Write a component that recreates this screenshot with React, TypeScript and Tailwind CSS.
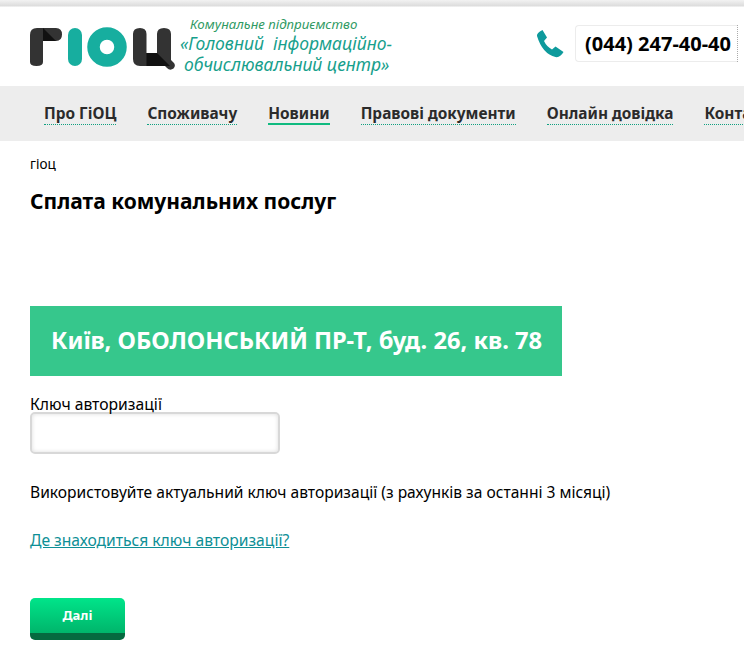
const NAV_ITEMS = ['Про ГіОЦ', 'Споживачу', 'Новини', 'Правові документи', 'Онлайн довідка', 'Контакти']

function Logo() {
  return (
    <svg width="146" height="43" viewBox="0 0 146 43" className="shrink-0">
      {/* Г */}
      <path d="M0 35 V8 Q0 1 7 1 H26 Q32 1 32 7.500 Q32 14 26 14 H13 V35 Q13 39 6.500 39 Q0 39 0 35 Z" fill="#333333" />
      <path d="M13 1 L26 14 H13 Z" fill="#111111" />
      {/* І */}
      <rect x="38" y="1" width="14" height="38" rx="7" fill="#17ae9f" />
      {/* О */}
      <circle cx="77" cy="20" r="13.500" fill="none" stroke="#17ae9f" strokeWidth="12.500" />
      {/* Ц */}
      <path d="M103 7 Q103 1 110 1 Q116.500 1 116.500 7 V26 H127 V7 Q127 1 134 1 Q141 1 141 7 V33 L144 36 Q146 39 143.500 41.500 Q140 44 137 41 L135 39 H110 Q103 39 103 32 Z" fill="#333333" />
      <path d="M116.500 26 H127 L140 39 H116.500 Z" fill="#111111" />
    </svg>
  )
}

function PhoneIcon() {
  return (
    <svg width="28" height="28" viewBox="0 0 28 28" className="shrink-0">
      <path d="M1 6 Q0.500 3 6.500 0 L11 7.500 L8 11 Q10.500 16.500 16 19.500 L19.500 16.500 L27.500 22 Q24 28 19.500 27 Q6.500 24 1 6 Z" fill="#0e9a9c" />
    </svg>
  )
}

export default function App() {
  return (
    <div className="h-[671px] w-[744px] overflow-hidden bg-white text-black" style={{ fontFamily: '"Noto Sans", sans-serif' }}>
      {/* Header */}
      <header className="flex h-[86px] items-start bg-[linear-gradient(#f2f2f2_0,#dcdcdc_6px,#ffffff_7px)] pl-[30px]">
        <div className="mt-[27px]">
          <Logo />
        </div>
        <div className="ml-[4px] mt-[16px] w-[230px] text-[17.5px] italic leading-[21px] text-[#17a08c]">
          <div className="pl-[10px] text-[13.300px] leading-[17px] text-[#2f9a63]">Комунальне підприємство</div>
          <div className="whitespace-nowrap">«Головний&nbsp; інформаційно-</div>
          <div className="whitespace-nowrap pl-[4px]">обчислювальний центр»</div>
        </div>
        <div className="ml-[126px] mt-[30px]">
          <PhoneIcon />
        </div>
        <div className="ml-[11px] mt-[25px] flex h-[37px] w-[162px] shrink-0 items-center whitespace-nowrap rounded-l-[4px] border border-r-0 border-[#ececec] pl-[9px] text-[20px] font-bold">
          (044) 247-40-40
        </div>
        <div className="mt-[25px] h-[37px] border-l border-dotted border-[#aaaaaa]" />
      </header>

      {/* Nav */}
      <nav className="flex h-[55px] items-center gap-[31px] overflow-hidden whitespace-nowrap bg-[#ededed] pl-[44px] pt-[2px] text-[15.400px] font-bold text-[#2b2b2b]">
        {NAV_ITEMS.map(item => (
          <a
            key={item}
            className={item === 'Новини'
              ? 'border-b-2 border-[#10bb80] leading-[19px]'
              : 'border-b border-dotted border-[#10a080] pb-px leading-[19px]'}
          >
            {item}
          </a>
        ))}
      </nav>

      <main className="px-[30px]">
        <div className="mt-[14px] text-[13.500px] leading-[18px]">гіоц</div>
        <h1 className="mt-[14px] text-[21px] font-bold leading-[28px]">Сплата комунальних послуг</h1>

        {/* Address banner */}
        <div className="mt-[91px] flex h-[70px] w-[532px] items-center whitespace-nowrap bg-[#36c78c] pl-[21px] text-[23.700px] font-bold text-white">
          Київ, ОБОЛОНСЬКИЙ ПР-Т, буд. 26, кв. 78
        </div>

        {/* Form */}
        <label className="mt-[20px] block text-[15.700px] leading-[16px]">Ключ авторизації</label>
        <input className="block h-[42px] w-[250px] rounded-[5px] border-2 border-[#d8d8d8] bg-white shadow-[inset_0_0_4px_#dddddd]" />
        <p className="mt-[28px] whitespace-nowrap text-[15.600px] leading-[20px]">Використовуйте актуальний ключ авторизації (з рахунків за останні 3 місяці)</p>
        <a className="mt-[28px] block text-[15.660px] leading-[20px] text-[#0e8f96] underline">Де знаходиться ключ авторизації?</a>

        <button className="mt-[48px] block h-[42px] w-[95px] rounded-[5px] border-b-[7px] border-[#05693f] bg-gradient-to-b from-[#00e58a] to-[#00b56b] text-[13px] font-bold text-white">
          Далі
        </button>
      </main>
    </div>
  )
}
